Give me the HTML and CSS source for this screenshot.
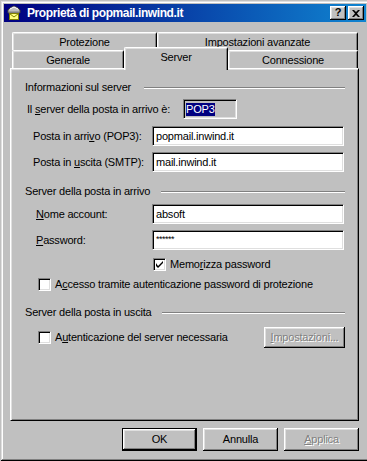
FILE: index.html
```html
<!DOCTYPE html>
<html lang="it">

<head>
    <meta charset="utf-8">
    <title>Proprietà di popmail.inwind.it</title>
    <link rel="stylesheet" href="styles.css">
</head>

<body>
    <div class="window">

        <div class="titlebar">
            <svg class="appicon" width="16" height="16" viewBox="0 0 16 16">
                <path d="M2 8 L2 5 L4 3 L8 1 L12 3 L14 5 L14 8 Z" fill="#c0c0c0" stroke="#404040" stroke-width="1" />
                <path d="M4 4 L8 2 L12 4" fill="none" stroke="#fff" stroke-width="1" />
                <path d="M3 7 L13 7" stroke="#808080" stroke-width="1" />
                <rect x="3.5" y="8.5" width="9" height="6" fill="#ffff80" stroke="#808000" stroke-width="1" />
                <path d="M3.5 8.5 L8 12 L12.5 8.5" fill="none" stroke="#808000" stroke-width="1" />
            </svg>
            <span class="title">Proprietà di popmail.inwind.it</span>
            <div class="tbtns">
                <span class="tbtn help">?</span>
                <span class="tbtn close">
                    <svg width="8" height="7" viewBox="0 0 8 7">
                        <path d="M0 0 L2 0 L4 2 L6 0 L8 0 L5 3.5 L8 7 L6 7 L4 5 L2 7 L0 7 L3 3.5 Z" fill="#000" />
                    </svg>
                </span>
            </div>
        </div>

        <div class="dialog">

            <div class="tabs">
                <div class="tabrow">
                    <div class="tab t_prot">Protezione</div>
                    <div class="tab t_avanz">Impostazioni avanzate</div>
                </div>
                <div class="tabrow">
                    <div class="tab t_gen">Generale</div>
                    <div class="tab t_server tab_active">Server</div>
                    <div class="tab t_conn">Connessione</div>
                </div>
            </div>

            <div class="panel">

                <div class="group g1">
                    <span>Informazioni sul server</span>
                    <span class="rule"></span>
                </div>

                <div class="row r_tipo">
                    <label class="lbl_tipo">Il <u>s</u>erver della posta in arrivo è:</label>
                    <span class="field readonly"><span class="selected">POP3</span></span>
                </div>

                <div class="row r_in1">
                    <label class="lbl_a">Posta in arri<u>v</u>o (POP3):</label>
                    <span class="field">popmail.inwind.it</span>
                </div>

                <div class="row r_in2">
                    <label class="lbl_a">Posta in <u>u</u>scita (SMTP):</label>
                    <span class="field">mail.inwind.it</span>
                </div>

                <div class="group g2">
                    <span>Server della posta in arrivo</span>
                    <span class="rule"></span>
                </div>

                <div class="row r_nome">
                    <label class="lbl_b"><u>N</u>ome account:</label>
                    <span class="field">absoft</span>
                </div>

                <div class="row r_pwd">
                    <label class="lbl_b"><u>P</u>assword:</label>
                    <span class="field pwd">******</span>
                </div>

                <div class="check c_mem">
                    <span class="box">
                        <svg width="7" height="7" viewBox="0 0 7 7">
                            <path d="M0 2 L0 5 L2 7 L7 2 L7 0 L2 5 Z" fill="#000" />
                        </svg>
                    </span>
                    <span>Memo<u>r</u>izza password</span>
                </div>

                <div class="check c_acc">
                    <span class="box"></span>
                    <span>A<u>c</u>cesso tramite autenticazione password di protezione</span>
                </div>

                <div class="group g3">
                    <span>Server della posta in uscita</span>
                    <span class="rule"></span>
                </div>

                <div class="row r_aut">
                    <div class="check">
                        <span class="box"></span>
                        <span>A<u>u</u>tenticazione del server necessaria</span>
                    </div>
                    <span class="btn disabled b_imp"><u>I</u>mpostazioni...</span>
                </div>

            </div>

            <div class="actions">
                <span class="btn default">OK</span>
                <span class="btn">Annulla</span>
                <span class="btn disabled"><u>A</u>pplica</span>
            </div>

        </div>
    </div>
</body>

</html>
```

FILE: styles.css
```css
* {
    box-sizing: border-box;
    margin: 0;
    padding: 0;
}

body {
    background: #c0c0c0;
    font-family: 'Liberation Sans', Arial, sans-serif;
    font-size: 11px;
    line-height: 13px;
    letter-spacing: -0.2px;
    color: #000;
    overflow: hidden;
}

u {
    text-decoration: underline;
    text-underline-offset: 1px;
}

.window {
    margin: 1px 0 0 1px;
    width: 368px;
    height: 460px;
    padding: 3px;
    background: #c0c0c0;
    box-shadow: inset -1px -1px #000, inset 1px 1px #dfdfdf, inset -2px -2px #808080, inset 2px 2px #fff;
}

/* title bar */

.titlebar {
    display: flex;
    align-items: center;
    height: 18px;
    background: linear-gradient(to right, #000080, #1084d0);
    color: #fff;
}

.appicon {
    margin: 0 5px 0 2px;
}

.title {
    font-weight: bold;
    font-size: 12px;
    letter-spacing: -0.4px;
}

.tbtns {
    display: flex;
    margin-left: auto;
    margin-right: 2px;
    gap: 2px;
}

.tbtn {
    display: flex;
    align-items: center;
    justify-content: center;
    width: 16px;
    height: 14px;
    background: #c0c0c0;
    color: #000;
    letter-spacing: 0;
    box-shadow: inset -1px -1px #000, inset 1px 1px #fff, inset -2px -2px #808080, inset 2px 2px #dfdfdf;
}

.help {
    font-weight: bold;
    font-size: 11px;
    padding-bottom: 1px;
}

/* dialog */

.dialog {
    padding: 10px 7px 0 6px;
}

.tabs {
    margin: 0 1px 0 2px;
}

.tabrow {
    display: flex;
    height: 18px;
}

.tab {
    display: flex;
    align-items: center;
    justify-content: center;
    height: 18px;
    padding-top: 1px;
    background: #c0c0c0;
    border-top: 1px solid #fff;
    border-left: 1px solid #fff;
    border-right: 1px solid #000;
    border-radius: 2px 2px 0 0;
    box-shadow: inset 1px 1px #dfdfdf, inset -1px 0 #808080;
}

.t_prot {
    width: 145px;
}

.t_avanz {
    width: 201px;
}

.t_gen {
    width: 112px;
}

.t_server {
    width: 104px;
}

.t_conn {
    width: 130px;
}

.tab_active {
    position: relative;
    z-index: 2;
    height: 23px;
    margin-top: -3px;
    margin-bottom: -2px;
    padding-top: 0;
    padding-bottom: 4px;
}

.panel {
    display: flex;
    flex-direction: column;
    height: 353px;
    padding: 0 13px 0 0;
    border-top: 1px solid #fff;
    border-left: 1px solid #fff;
    border-right: 1px solid #000;
    border-bottom: 1px solid #000;
    box-shadow: inset 1px 1px #dfdfdf, inset -1px -1px #808080;
}

/* group headers */

.group {
    display: flex;
    align-items: center;
    padding-left: 14px;
    height: 13px;
}

.rule {
    flex: 1;
    height: 2px;
    margin-left: 11px;
    border-top: 1px solid #808080;
    border-bottom: 1px solid #fff;
}

.g1 {
    margin-top: 12px;
}

.g1 .rule {
    margin-left: 13px;
}

.g2 {
    margin-top: 13px;
}

.g3 {
    margin-top: 15px;
}

/* label + field rows */

.row {
    display: flex;
    align-items: center;
}

.r_tipo {
    margin-top: 5px;
    padding-left: 16px;
}

.r_in1 {
    margin-top: 7px;
    padding-left: 22px;
}

.r_in2 {
    margin-top: 6px;
    padding-left: 22px;
}

.r_nome {
    margin-top: 6px;
    padding-left: 25px;
}

.r_pwd {
    margin-top: 6px;
    padding-left: 25px;
}

.lbl_tipo {
    width: 156px;
}

.lbl_a {
    width: 119px;
}

.lbl_b {
    width: 116px;
}

.field {
    display: flex;
    align-items: center;
    width: 192px;
    height: 20px;
    padding-left: 3px;
    background: #fff;
    border: 1px solid;
    border-color: #808080 #fff #fff #808080;
    box-shadow: inset 1px 1px #000, inset -1px -1px #dfdfdf;
}

.readonly {
    width: 54px;
    background: #c0c0c0;
    padding-left: 2px;
}

.selected {
    background: #000080;
    color: #fff;
    line-height: 13px;
}

.pwd {
    font-size: 9px;
    letter-spacing: -0.5px;
    align-items: flex-start;
    padding-top: 2px;
}

/* checkboxes */

.check {
    display: flex;
    align-items: center;
    gap: 4px;
}

.box {
    display: flex;
    align-items: center;
    justify-content: center;
    width: 13px;
    height: 13px;
    background: #fff;
    border: 1px solid;
    border-color: #808080 #fff #fff #808080;
    box-shadow: inset 1px 1px #000, inset -1px -1px #dfdfdf;
}

.c_mem {
    margin-top: 8px;
    padding-left: 142px;
}

.c_acc {
    margin-top: 7px;
    padding-left: 27px;
}

.r_aut {
    margin-top: 8px;
    padding-left: 27px;
}

/* buttons */

.btn {
    display: flex;
    align-items: center;
    justify-content: center;
    width: 75px;
    height: 23px;
    background: #c0c0c0;
    box-shadow: inset -1px -1px #000, inset 1px 1px #fff, inset -2px -2px #808080, inset 2px 2px #dfdfdf;
}

.default {
    border: 1px solid #000;
}

.disabled {
    color: #808080;
    text-shadow: 1px 1px #fff;
}

.b_imp {
    margin-left: auto;
    width: 81px;
    height: 21px;
}

.actions {
    display: flex;
    justify-content: flex-end;
    gap: 6px;
    margin-top: 7px;
}
```
